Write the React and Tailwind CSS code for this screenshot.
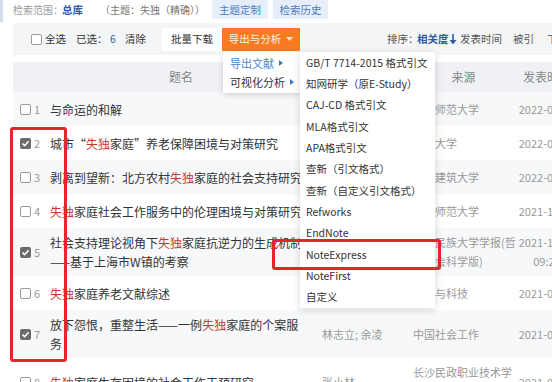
import React from 'react';

const rows = [
    { n: 1, t: '与命运的和解', a: '刘琦', s: '东北师范大学', d: '2022-05-01', c: false },
    { n: 2, t: '城市“失独家庭”养老保障困境与对策研究', a: '陈楠', s: '吉林大学', d: '2022-05-01', c: true },
    { n: 3, t: '剥离到望新：北方农村失独家庭的社会支持研究', a: '李雪', s: '沈阳建筑大学', d: '2022-04-01', c: false },
    { n: 4, t: '失独家庭社会工作服务中的伦理困境与对策研究', a: '张悦', s: '华中师范大学', d: '2021-12-01', c: false },
    { n: 5, t: '社会支持理论视角下失独家庭抗逆力的生成机制——基于上海市W镇的考察', a: '方曙光', s: '中南民族大学学报(哲学社会科学版)', d: '2021-11-25 09:27', c: true },
    { n: 6, t: '失独家庭养老文献综述', a: '王莹', s: '经济与科技', d: '2021-09-15', c: false },
    { n: 7, t: '放下怨恨，重整生活——一例失独家庭的个案服务', a: '林志立; 余凌', s: '中国社会工作', d: '2021-07-20', c: true },
    { n: 8, t: '失独家庭生存困境的社会工作干预研究', a: '张小林', s: '长沙民政职业技术学院学报', d: '2021-06-28', c: false },
];

const citeFormats = [
    'GB/T 7714-2015 格式引文',
    '知网研学（原E-Study）',
    'CAJ-CD 格式引文',
    'MLA格式引文',
    'APA格式引文',
    '查新（引文格式）',
    '查新（自定义引文格式）',
    'Refworks',
    'EndNote',
    'NoteExpress',
    'NoteFirst',
    '自定义',
];

const Box = ({ checked }) =>
    checked ? (
        <span className="w-[11px] h-[11px] rounded-[2px] bg-[#6b6b6b] flex items-center justify-center shrink-0">
            <svg width="9" height="9" viewBox="0 0 9 9">
                <path d="M1.5 4.6 L3.7 6.7 L7.6 2.2" fill="none" stroke="#fff" strokeWidth="1.6" />
            </svg>
        </span>
    ) : (
        <span className="w-[11px] h-[11px] rounded-[2px] border border-[#9a9a9a] bg-white shrink-0" />
    );

// highlight the search keyword in red
const Title = ({ text }) => {
    const parts = text.split('失独');
    return parts.map((p, i) => (
        <React.Fragment key={i}>
            {p}
            {i < parts.length - 1 && <span className="text-[#c23a2e]">失独</span>}
        </React.Fragment>
    ));
};

const App = () => {
    return (
        <div className="relative w-[552px] h-[382px] overflow-hidden bg-white font-['Noto_Sans_CJK_SC','Noto_Sans',sans-serif] text-[#333]">
            <div className="absolute left-0 top-0 w-[3px] h-[22px] bg-[#d3deed]" />

            {/* search scope */}
            <div className="flex items-center w-[600px] h-[19px] pl-[13px] text-[10.5px] whitespace-nowrap">
                <span className="w-[49px] shrink-0 text-[10px] text-[#999]">检索范围：</span>
                <span className="w-[38px] shrink-0 font-bold text-[#2c5ea8]">总库</span>
                <span className="w-[112px] shrink-0 text-[10px] text-[#777]">（主题：失独（精确））</span>
                <span className="h-[19px] w-[56px] shrink-0 flex items-center justify-center bg-[#e6eef9] text-[#4c7cc2]">主题定制</span>
                <span className="ml-[5px] h-[19px] w-[55px] shrink-0 flex items-center justify-center bg-[#e6eef9] text-[#4c7cc2]">检索历史</span>
            </div>

            {/* toolbar */}
            <div className="ml-[13px] mt-[4px] w-[600px] h-[32px] bg-[#f4f5f7] flex items-center pl-[18px] text-[10.5px] whitespace-nowrap">
                <Box />
                <span className="ml-[3px] w-[31px] shrink-0">全选</span>
                <span className="w-[34px] shrink-0">已选：</span>
                <span className="w-[15px] shrink-0 text-[#2c5ea8]">6</span>
                <span className="w-[37px] shrink-0">清除</span>
                <span className="h-[23px] w-[60px] shrink-0 flex items-center justify-center bg-white text-[#333]">批量下载</span>
                <span className="h-[23px] w-[78px] shrink-0 flex items-center justify-center gap-[5px] bg-[#fa7a22] text-[#fff2e6]">
                    导出与分析
                    <svg width="7" height="4" viewBox="0 0 7 4"><path d="M0 0 H7 L3.5 4 Z" fill="#fde3cc" /></svg>
                </span>
                <span className="ml-[87px] w-[30px] shrink-0 text-[#555]">排序：</span>
                <span className="w-[32px] shrink-0 font-bold text-[#2c5ea8]">相关度</span>
                <svg className="shrink-0" width="8" height="11" viewBox="0 0 8 11">
                    <path d="M4 0 V8" stroke="#2c5ea8" strokeWidth="1.6" />
                    <path d="M0.5 6 L4 10.5 L7.5 6 Z" fill="#2c5ea8" />
                </svg>
                <span className="ml-[3px] w-[53px] shrink-0 text-[#555]">发表时间</span>
                <span className="w-[34px] shrink-0 text-[#555]">被引</span>
                <span className="shrink-0 text-[#555]">下载</span>
            </div>

            {/* result table */}
            <div className="ml-[13px] mt-[7px] w-[600px] text-[11px]">
                <div className="grid grid-cols-[34px_268px_95px_107px_60px] h-[30px] items-center bg-[#eff1f4] text-[12px] text-[#888]">
                    <span />
                    <span className="text-center">题名</span>
                    <span className="text-center">作者</span>
                    <span className="text-center">来源</span>
                    <span className="text-center whitespace-nowrap">发表时间</span>
                </div>
                {rows.map((r) => (
                    <div
                        key={r.n}
                        className={`grid grid-cols-[34px_268px_95px_107px_60px] items-center min-h-[34px] py-[5px] leading-[19px] ${r.n % 2 ? 'bg-[#f7f8fa]' : 'bg-white'}`}
                    >
                        <div className="flex items-center pl-[7px] gap-[3px] text-[#999]">
                            <Box checked={r.c} />
                            <span>{r.n}</span>
                        </div>
                        <div className="pl-[3px] pr-[9px] text-[12px] text-[#333]">
                            <Title text={r.t} />
                        </div>
                        <div className="pl-[7px] text-[#999] whitespace-nowrap">{r.a}</div>
                        <div className="pl-[3px] text-[#999]">{r.s}</div>
                        <div className="text-center text-[#999]">{r.d}</div>
                    </div>
                ))}
            </div>

            {/* export menu */}
            <div className="absolute left-[223px] top-[52px] w-[77px] h-[41px] bg-white shadow-[0_2px_6px_rgba(0,0,0,0.15)] text-[11px] flex flex-col justify-center gap-[3px] pl-[7px]">
                <div className="flex items-center gap-[5px] text-[#4a86cf]">
                    导出文献
                    <svg width="4" height="6" viewBox="0 0 4 6"><path d="M0 0 L4 3 L0 6 Z" fill="#3a78c8" /></svg>
                </div>
                <div className="flex items-center gap-[5px] text-[#333]">
                    可视化分析
                    <svg width="4" height="6" viewBox="0 0 4 6"><path d="M0 0 L4 3 L0 6 Z" fill="#3a78c8" /></svg>
                </div>
            </div>

            <div className="absolute left-[300px] top-[52px] w-[135px] bg-white shadow-[0_2px_8px_rgba(0,0,0,0.16)] text-[10.5px] text-[#333]">
                {citeFormats.map((f) => (
                    <div key={f} className="h-[21.33px] flex items-center pl-[6px] whitespace-nowrap">{f}</div>
                ))}
            </div>

            {/* annotation boxes */}
            <div className="absolute left-[10px] top-[127px] w-[57px] h-[235px] border-[3px] border-[#e3262c] rounded-[3px]" />
            <div className="absolute left-[272px] top-[239px] w-[169px] h-[31px] border-[3px] border-[#e3262c] rounded-[3px]" />
        </div>
    );
};

export default App;
